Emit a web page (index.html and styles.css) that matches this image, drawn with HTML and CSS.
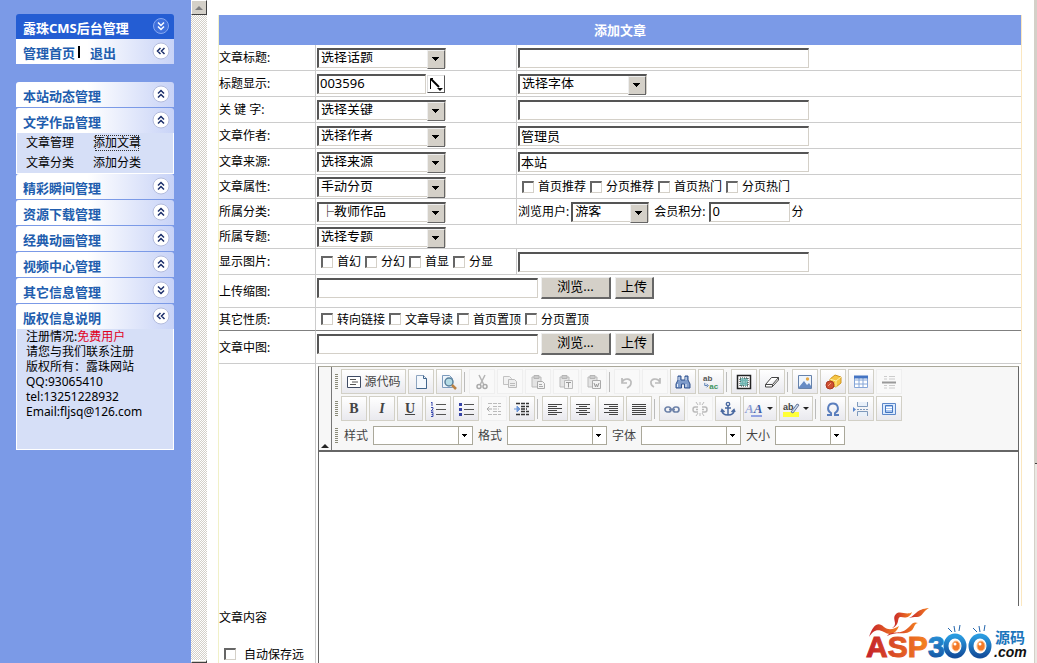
FILE: index.html
```html
<!DOCTYPE html>
<html lang="zh-CN">
<head>
    <meta charset="UTF-8">
    <meta name="viewport" content="width=device-width, initial-scale=1.0">
    <title>露珠CMS后台管理</title>
    <link rel="stylesheet" href="styles.css">
</head>
<body>
    <svg class="sprite" aria-hidden="true">
        <symbol id="up" viewBox="0 0 18 18"><circle cx="9" cy="9" r="8" fill="#fff" stroke="#b4bcdc"/><path d="M6 8.5l3-3 3 3M6 12.5l3-3 3 3" fill="none" stroke="#1c2f6b" stroke-width="1.5"/></symbol>
        <symbol id="down" viewBox="0 0 18 18"><circle cx="9" cy="9" r="8" fill="#fff" stroke="#b4bcdc"/><path d="M6 5.5l3 3 3-3M6 9.5l3 3 3-3" fill="none" stroke="#1c2f6b" stroke-width="1.5"/></symbol>
        <symbol id="left" viewBox="0 0 18 18"><circle cx="9" cy="9" r="8" fill="#fff" stroke="#b4bcdc"/><path d="M8.5 6l-3 3 3 3M12.5 6l-3 3 3 3" fill="none" stroke="#1c2f6b" stroke-width="1.5"/></symbol>
        <symbol id="clip" viewBox="0 0 16 16"><path d="M2 3h9v10H2z" fill="#e4e4e4" stroke="#bbb"/><path d="M4 1.5h5v3H4z" fill="#ccc" stroke="#b5b5b5"/></symbol>
    </svg>

    <aside class="sidebar">
        <div class="panel">
            <h1 class="head head-main">露珠CMS后台管理
                <svg class="toggle" viewBox="0 0 18 18"><circle cx="9" cy="9" r="7.5" fill="#3f70dc" stroke="#86a8f2"/><path d="M6 5.5l3 3 3-3M6 9.5l3 3 3-3" fill="none" stroke="#fff" stroke-width="1.5"/></svg>
            </h1>
            <div class="head head-flat"><a href="#">管理首页</a><i class="bar"></i><a href="#">退出</a><svg class="toggle"><use href="#left"/></svg></div>
        </div>

        <nav class="menu">
            <button class="head">本站动态管理<svg class="toggle"><use href="#up"/></svg></button>
            <button class="head">文学作品管理<svg class="toggle"><use href="#up"/></svg></button>
            <div class="submenu">
                <a href="#">文章管理</a><a href="#" class="focused">添加文章</a>
                <a href="#">文章分类</a><a href="#">添加分类</a>
            </div>
            <button class="head">精彩瞬间管理<svg class="toggle"><use href="#up"/></svg></button>
            <button class="head">资源下载管理<svg class="toggle"><use href="#up"/></svg></button>
            <button class="head">经典动画管理<svg class="toggle"><use href="#up"/></svg></button>
            <button class="head">视频中心管理<svg class="toggle"><use href="#up"/></svg></button>
            <button class="head">其它信息管理<svg class="toggle"><use href="#down"/></svg></button>
            <button class="head">版权信息说明<svg class="toggle"><use href="#left"/></svg></button>
            <div class="info">
                注册情况:<span class="red">免费用户</span><br>
                请您与我们联系注册<br>
                版权所有：露珠网站<br>
                QQ:93065410<br>
                tel:13251228932<br>
                Email:fljsq@126.com
            </div>
        </nav>
    </aside>

    <div class="scrollbar">
        <div class="scroll-button scroll-up"></div>
        <div class="scroll-button"></div>
    </div>

    <main class="main">
        <form>
        <table class="form-table">
            <colgroup><col class="col-label"><col class="col-field"><col></colgroup>
            <tr><th colspan="3" class="title">添加文章</th></tr>
            <tr>
                <td><label for="title">文章标题:</label></td>
                <td><span class="select"><select aria-label="话题"><option>选择话题</option></select></span></td>
                <td><input type="text" class="text wide" id="title"></td>
            </tr>
            <tr>
                <td><label for="color">标题显示:</label></td>
                <td>
                    <div class="line">
                        <input type="text" class="text color" id="color" value="003596">
                        <button type="button" class="picker" aria-label="颜色"><svg viewBox="0 0 16 16"><path d="M3 3l8 8" stroke="#000" stroke-width="2"/><path d="M2.5 13V2.5H5" fill="none" stroke="#000"/><path d="M9 12h6l-3 3z"/></svg></button>
                    </div>
                </td>
                <td><span class="select"><select aria-label="字体"><option>选择字体</option></select></span></td>
            </tr>
            <tr>
                <td><label for="keyword">关 键 字:</label></td>
                <td><span class="select"><select aria-label="关键"><option>选择关键</option></select></span></td>
                <td><input type="text" class="text wide" id="keyword"></td>
            </tr>
            <tr>
                <td><label for="author">文章作者:</label></td>
                <td><span class="select"><select aria-label="作者"><option>选择作者</option></select></span></td>
                <td><input type="text" class="text wide" id="author" value="管理员"></td>
            </tr>
            <tr>
                <td><label for="source">文章来源:</label></td>
                <td><span class="select"><select aria-label="来源"><option>选择来源</option></select></span></td>
                <td><input type="text" class="text wide" id="source" value="本站"></td>
            </tr>
            <tr class="short">
                <td><label for="paging">文章属性:</label></td>
                <td><span class="select"><select id="paging"><option>手动分页</option></select></span></td>
                <td>
                    <div class="line checks">
                        <label><input type="checkbox">首页推荐</label>
                        <label><input type="checkbox">分页推荐</label>
                        <label><input type="checkbox">首页热门</label>
                        <label><input type="checkbox">分页热门</label>
                    </div>
                </td>
            </tr>
            <tr>
                <td><label for="category">所属分类:</label></td>
                <td><span class="select"><select id="category"><option>├教师作品</option></select></span></td>
                <td>
                    <div class="line">
                        <label for="viewer">浏览用户:</label>
                        <span class="select select-small"><select id="viewer"><option>游客</option></select></span>
                        <label for="points" class="points">会员积分:</label>
                        <input type="text" class="text number" id="points" value="0">分
                    </div>
                </td>
            </tr>
            <tr class="short">
                <td><label for="topic">所属专题:</label></td>
                <td colspan="2"><span class="select"><select id="topic"><option>选择专题</option></select></span></td>
            </tr>
            <tr>
                <td><label for="picture">显示图片:</label></td>
                <td>
                    <div class="line checks">
                        <label><input type="checkbox">首幻</label>
                        <label><input type="checkbox">分幻</label>
                        <label><input type="checkbox">首显</label>
                        <label><input type="checkbox">分显</label>
                    </div>
                </td>
                <td><input type="text" class="text wide" id="picture"></td>
            </tr>
            <tr class="tall">
                <td><label for="thumb">上传缩图:</label></td>
                <td colspan="2">
                    <div class="line upload">
                        <input type="text" class="text file" id="thumb">
                        <button type="button" class="button browse">浏览...</button>
                        <button type="button" class="button">上传</button>
                    </div>
                </td>
            </tr>
            <tr class="dark">
                <td>其它性质:</td>
                <td colspan="2">
                    <div class="line checks">
                        <label><input type="checkbox">转向链接</label>
                        <label><input type="checkbox">文章导读</label>
                        <label><input type="checkbox">首页置顶</label>
                        <label><input type="checkbox">分页置顶</label>
                    </div>
                </td>
            </tr>
            <tr class="tall">
                <td><label for="middle">文章中图:</label></td>
                <td colspan="2">
                    <div class="line upload">
                        <input type="text" class="text file" id="middle">
                        <button type="button" class="button browse">浏览...</button>
                        <button type="button" class="button">上传</button>
                    </div>
                </td>
            </tr>
            <tr>
                <td>
                    <label for="content">文章内容</label>
                    <label class="autosave"><input type="checkbox">自动保存远</label>
                </td>
                <td colspan="2" class="editor-cell">
                    <div class="editor">
                        <div class="editor-top">
                            <button type="button" class="collapse" aria-label="收起"></button>
                            <div class="toolbars">
                                <div class="toolbar">
                                    <i class="handle"></i>
                                    <button type="button" class="tool source"><svg viewBox="0 0 16 16"><path d="M1.5 2.5h13v11h-13z" fill="#fff" stroke="#3f4b63"/><path d="M4 5.5h6M6 8h6M4 10.5h6" stroke="#555"/></svg>源代码</button>
                                    <button type="button" class="tool"><svg viewBox="0 0 16 16"><path d="M3.5 1.5h7l3 3v10h-10z" fill="#f4f8fd" stroke="#8ea5c0"/><path d="M10.5 1.5v3h3v10h-10" fill="none" stroke="#41658c"/></svg></button>
                                    <button type="button" class="tool"><svg viewBox="0 0 16 16"><path d="M1.5 1.5h7l3 3v9h-10z" fill="#edf4fb" stroke="#7d9bbd"/><circle cx="8" cy="8" r="4" fill="#b5dbe5" stroke="#587f9c" stroke-width="1.5"/><path d="M11 11l4 4" stroke="#bb8244" stroke-width="2.5"/></svg></button>
                                    <i class="sep"></i>
                                    <button type="button" class="tool off"><svg viewBox="0 0 16 16"><path d="M5 1l5 10M11 1L6 11" stroke="#b5b5b5" stroke-width="1.5"/><g fill="none" stroke="#aaa" stroke-width="1.5"><circle cx="5" cy="12.5" r="2"/><circle cx="11" cy="12.5" r="2"/></g></svg></button>
                                    <button type="button" class="tool off"><svg viewBox="0 0 16 16"><path d="M1.5 2.5h6l2 2v6h-8z" fill="#f2f2f2" stroke="#c2c2c2"/><path d="M6.5 5.5h6l2 2v6h-8z" fill="#eee" stroke="#bbb"/><path d="M8 9.5h5M8 11.5h5" stroke="#bbb"/></svg></button>
                                    <button type="button" class="tool off"><svg viewBox="0 0 16 16"><use href="#clip"/><path d="M7.5 7.5h5l2 2v5h-7z" fill="#f3f3f3" stroke="#aaa"/><path d="M9 10.5h3M9 12.5h4" stroke="#aaa"/></svg></button>
                                    <button type="button" class="tool off"><svg viewBox="0 0 16 16"><use href="#clip"/><path d="M6.5 6.5h8v8h-8z" fill="#f3f3f3" stroke="#bbb"/><path d="M8 8.5h5M10.5 8.5v5" stroke="#999"/></svg></button>
                                    <button type="button" class="tool off"><svg viewBox="0 0 16 16"><use href="#clip"/><path d="M6.5 6.5h8v8h-8z" fill="#f3f3f3" stroke="#aaa"/><path d="M8 9l1.5 4 1-3 1 3L13 9" fill="none" stroke="#999"/></svg></button>
                                    <i class="sep"></i>
                                    <button type="button" class="tool off"><svg viewBox="0 0 16 16"><path d="M3 4v5h5M3 8c3-5 10-3 9 1 0 2-2 4-4 5" fill="none" stroke="#bbb" stroke-width="1.7"/></svg></button>
                                    <button type="button" class="tool off"><svg viewBox="0 0 16 16"><path d="M13 4v5H8M13 8C10 3 3 5 4 9c0 2 1 3 3 4" fill="none" stroke="#bbb" stroke-width="1.7"/></svg></button>
                                    <button type="button" class="tool"><svg viewBox="0 0 16 16"><path d="M3 2h3v4h4V2h3v4l2 4v4H9.5v-4h-3v4H1v-4l2-4z" fill="#7f9ccb" stroke="#31538e"/><path d="M2.5 10v3M11 10v3M4 3v3M11 3v3" stroke="#e6eefb"/></svg></button>
                                    <button type="button" class="tool"><svg viewBox="0 0 18 18"><text x="0" y="8" class="icon-text" fill="#555">ab</text><text x="7" y="17" class="icon-text" fill="#3f9460">ac</text><path d="M2 10v3h3M4 11l2 2-2 2" fill="none" stroke="#4670ac"/></svg></button>
                                    <i class="sep"></i>
                                    <button type="button" class="tool"><svg viewBox="0 0 16 16"><path d="M1.5 1.5h13v13h-13z" fill="#fff" stroke="#222" stroke-width="1.5"/><path d="M4 4h8v8H4z" fill="#8fc5c2" stroke="#222" stroke-dasharray="1 1"/><path d="M4 6.5h8M4 9.5h8M6.5 4v8M9.5 4v8" stroke="#6fb5b1"/></svg></button>
                                    <button type="button" class="tool"><svg viewBox="0 0 16 16"><path d="M1.5 10.5l6-7h7l-6 7zM1.5 10.5V13H8l6.5-7V3.5M8.5 10.5V13" fill="#fff" stroke="#444"/></svg></button>
                                    <i class="sep"></i>
                                    <button type="button" class="tool"><svg viewBox="0 0 16 16"><path d="M1.5 1.5h13v13h-13z" fill="#eef5fd" stroke="#6682aa"/><path d="M2 13l5-6 3 4 2-2 2 3v2H2z" fill="#668bc4"/><circle cx="10.5" cy="5" r="1.7" fill="#e6a744"/></svg></button>
                                    <button type="button" class="tool"><svg viewBox="0 0 16 16"><path d="M5 5l5-4 6 2v6l-5 4-6-2z" fill="#f5c544" stroke="#cf9520"/><path d="M5 5l6 2 5-4M11 7v6" fill="none" stroke="#fff0a2"/><circle cx="5" cy="11" r="4" fill="#cf5033" stroke="#a93722"/><path d="M3 12l3-3" stroke="#f3a080"/></svg></button>
                                    <button type="button" class="tool"><svg viewBox="0 0 16 16"><path d="M1.5 2.5h13v11h-13zM1.5 6h13M1.5 10h13M6 3v11M10 3v11" fill="#fff" stroke="#86a6d8"/><path d="M1 1.5h14v3H1z" fill="#4474c3"/></svg></button>
                                    <button type="button" class="tool off"><svg viewBox="0 0 16 16"><path d="M3 2.5h3M8 2.5h6M3 5h3M8 5h6M3 11.5h3M8 11.5h6M3 14h3M8 14h6" stroke="#ccc"/><path d="M1 8.5h14" stroke="#999" stroke-width="2"/></svg></button>
                                </div>
                                <div class="toolbar">
                                    <i class="handle"></i>
                                    <button type="button" class="tool letter"><b>B</b></button>
                                    <button type="button" class="tool letter"><em>I</em></button>
                                    <button type="button" class="tool letter"><u>U</u></button>
                                    <button type="button" class="tool"><svg viewBox="0 0 16 16"><path d="M6 3.5h10M6 8.5h10M6 13.5h10" stroke="#555"/><path d="M1 2l1-1v4M1 6.5h2V8l-2 2h2.5M1 11.5h2v2H1.5M3 13.5v2H1" fill="none" stroke="#3848ae"/></svg></button>
                                    <button type="button" class="tool"><svg viewBox="0 0 16 16"><path d="M6 3.5h10M6 8.5h10M6 13.5h10" stroke="#555"/><path d="M1 2h3v3H1zM1 7h3v3H1zM1 12h3v3H1z" fill="#3643a6"/></svg></button>
                                    <button type="button" class="tool off"><svg viewBox="0 0 16 16"><path d="M2 2.5h13M7 5.5h8M7 8h6M7 10.5h8M2 13.5h13" stroke="#bbb" stroke-dasharray="4 1"/><path d="M6 8H1M3.500 5.500L1 8l2.500 2.500" fill="none" stroke="#aaa"/></svg></button>
                                    <button type="button" class="tool"><svg viewBox="0 0 16 16"><path d="M2 2.5h13M7 5.5h8M7 8h6M7 10.5h8M2 13.5h13" stroke="#333" stroke-width="1.5" stroke-dasharray="4 1"/><path d="M0 8h5M3 5l3 3-3 3z" fill="#6e97d8" stroke="#6e97d8"/></svg></button>
                                    <i class="sep"></i>
                                    <button type="button" class="tool"><svg viewBox="0 0 16 16"><path d="M1 3.5h14M1 5.5h9M1 7.5h14M1 9.5h9M1 11.5h14M1 13.5h9" stroke="#444"/></svg></button>
                                    <button type="button" class="tool"><svg viewBox="0 0 16 16"><path d="M1 3.5h14M4 5.5h8M1 7.5h14M4 9.5h8M1 11.5h14M4 13.5h8" stroke="#444"/></svg></button>
                                    <button type="button" class="tool"><svg viewBox="0 0 16 16"><path d="M1 3.5h14M6 5.5h9M1 7.5h14M6 9.5h9M1 11.5h14M6 13.5h9" stroke="#444"/></svg></button>
                                    <button type="button" class="tool"><svg viewBox="0 0 16 16"><path d="M1 3.5h14M1 5.5h14M1 7.5h14M1 9.5h14M1 11.5h14M1 13.5h14" stroke="#444"/></svg></button>
                                    <i class="sep"></i>
                                    <button type="button" class="tool"><svg viewBox="0 0 16 16"><g fill="none" stroke="#6d82a9" stroke-width="1.7"><rect x="1" y="6" width="6" height="5" rx="2.5"/><rect x="9" y="6" width="6" height="5" rx="2.5"/><path d="M5 8.5h6"/></g></svg></button>
                                    <button type="button" class="tool off"><svg viewBox="0 0 16 16"><g fill="none" stroke="#bbb" stroke-width="1.5"><path d="M6 6H3q-2 0-2 2.5T3 11h3M10 6h3q2 0 2 2.5T13 11h-3M4 8.5h2M10 8.5h2"/><path d="M4 1l2 3M8 1v3M12 1l-2 3M4 15l2-3M8 15v-3M12 15l-2-3" stroke-width="1"/></g></svg></button>
                                    <button type="button" class="tool"><svg viewBox="0 0 16 16"><circle cx="8" cy="3" r="1.7" fill="none" stroke="#4868a0" stroke-width="1.3"/><path d="M8 5v9M5 7h6M2 9c0 4 3 5 6 5s6-1 6-5M1 11l1-2.5L4.5 11M11.5 11L14 8.5l1 2.5" fill="none" stroke="#4868a0" stroke-width="1.5"/></svg></button>
                                    <button type="button" class="tool menu-tool"><svg viewBox="0 0 16 16"><text x="-2" y="12" class="icon-a"><tspan fill="#8fa0d4">A</tspan><tspan fill="#3f5faa">A</tspan></text><path d="M4 15h11" stroke="#7388dd" stroke-width="1.5"/></svg><i class="arrow"></i></button>
                                    <button type="button" class="tool menu-tool"><svg viewBox="0 0 16 16"><path d="M0 11h16v5H0z" fill="#ffff38"/><text x="0" y="9" class="icon-text" fill="#444">ab</text><path d="M8 11l6-8 2 1-6 8z" fill="#c9daef" stroke="#68789a"/></svg><i class="arrow"></i></button>
                                    <i class="sep"></i>
                                    <button type="button" class="tool"><svg viewBox="0 0 16 16"><path d="M2 14h4v-2C1 9 3 2.5 8 2.5s7 6.5 2 9.5v2h4" fill="none" stroke="#5a7ebd" stroke-width="2"/></svg></button>
                                    <button type="button" class="tool"><svg viewBox="0 0 16 16"><path d="M4.5 1v4.5h10V1M4.5 15v-4.5h10V15" fill="#e9f0f9" stroke="#7f99bb"/><path d="M4 8.5h12" stroke="#7f99bb" stroke-dasharray="2 1"/><path d="M0 6l3 2.500L0 11z" fill="#5a86cc"/></svg></button>
                                    <button type="button" class="tool"><svg viewBox="0 0 16 16"><path d="M1.5 2.5h13v11h-13z" fill="#dceafd" stroke="#5c87c9"/><path d="M4.5 4.5h7v7h-7z" fill="#a8c4ef" stroke="#4476bf"/><path d="M5 6.5h6M5 8.5h6" stroke="#fff"/></svg></button>
                                </div>
                                <div class="toolbar">
                                    <i class="handle"></i>
                                    <label class="combo">样式<span><select></select></span></label>
                                    <label class="combo">格式<span><select></select></span></label>
                                    <label class="combo">字体<span><select></select></span></label>
                                    <label class="combo combo-size">大小<span><select></select></span></label>
                                </div>
                            </div>
                        </div>
                        <textarea id="content"></textarea>
                    </div>
                </td>
            </tr>
        </table>
        </form>
    </main>

    <div class="edge"></div>

    <svg class="logo" viewBox="0 0 166 57" role="img">
        <defs>
            <linearGradient id="fire"><stop offset="0" stop-color="#c4212b"/><stop offset="1" stop-color="#f58220"/></linearGradient>
            <linearGradient id="sea" x1="0" y1="0" x2="0" y2="1"><stop offset="0" stop-color="#2a9be0"/><stop offset="1" stop-color="#134f9c"/></linearGradient>
        </defs>
        <g fill="url(#fire)">
            <path d="M4 31C8 19 13 15 19 21c5 4 10 2 15-1-3 8-9 10-15 6C12 22 8 25 4 31z"/>
            <path d="M27 22c7-4-1-9 4-14 4-4 11 2 16-2-2 6-7 6-11 5-5 0 0 8-9 11z"/>
            <path d="M44 12c6-2 7-9 20-10-6 3-7 10-13 9-2 0-4 0-7 1z"/>
            <path d="M22 30c6-7 13 1 23-10 3-4 5-4 8-3-5 1-3 7-9 9-6 3-12-1-22 4z"/>
        </g>
        <text x="1" y="51" class="logo-main" fill="url(#fire)" stroke="url(#fire)">ASP</text>
        <text x="63" y="51" class="logo-main" fill="url(#sea)" stroke="url(#sea)">3</text>
        <g stroke="#2265ac" fill="none"><path d="M83 22l4 4M89 20l1 6M95 19l-1 6M108 22l4 4M114 20l1 6M120 19l-1 6"/></g>
        <g fill="#fff" stroke="url(#sea)" stroke-width="5"><ellipse cx="90" cy="40" rx="9" ry="10"/><ellipse cx="115" cy="40" rx="9" ry="10"/></g>
        <g fill="#f47a28" stroke="#ffc18a"><ellipse cx="91" cy="40" rx="4" ry="5"/><ellipse cx="116" cy="40" rx="4" ry="5"/></g>
        <g fill="#fff"><circle cx="90" cy="38" r="1.5"/><circle cx="115" cy="38" r="1.5"/></g>
        <text x="130" y="37" class="logo-cn">源码</text>
        <text x="129" y="51" class="logo-com">.com</text>
    </svg>
</body>
</html>
```
FILE: styles.css
```css
* {
    box-sizing: border-box;
}

body {
    margin: 0;
    height: 100vh;
    display: flex;
    overflow: hidden;
    position: relative;
    background-color: #fff;
    color: #000;
    font-family: "Noto Sans", "Noto Sans CJK SC", sans-serif;
    font-size: 12px;
    line-height: 15px;
}

button, input, select, textarea {
    font: inherit;
    color: inherit;
    margin: 0;
    border-radius: 0;
}

a {
    color: inherit;
    text-decoration: none;
}

.sprite {
    display: none;
}

/* sidebar */
.sidebar {
    flex: 0 0 191px;
    padding: 14px 17px 0 16px;
    background-color: #7b9ae7;
}

.panel {
    margin-bottom: 18px;
}

.menu {
    display: flex;
    flex-direction: column;
    gap: 1px;
}

.head {
    display: flex;
    align-items: center;
    width: 100%;
    height: 25px;
    margin: 0;
    padding: 3px 4px 0 7px;
    border: none;
    border-radius: 3px 3px 0 0;
    background: linear-gradient(to right, #fff 45%, #c8d3f7);
    color: #215dae;
    font-size: 13px;
    font-weight: bold;
    text-align: left;
    cursor: pointer;
}

.head-main {
    background: #245dd3;
    color: #fff;
}

.head-flat {
    border-radius: 0;
}

.toggle {
    width: 18px;
    height: 18px;
    margin-left: auto;
    margin-bottom: 4px;
}

.bar {
    width: 2px;
    height: 12px;
    margin: 0 10px 3px 3px;
    background-color: #000;
}

.submenu {
    display: grid;
    grid-template-columns: 67px 1fr;
    justify-items: start;
    height: 41px;
    margin: -1px 0;
    padding: 0 9px;
    line-height: 20px;
    border: 1px solid #fff;
    border-top: none;
    background-color: #d6dff7;
}

.focused {
    outline: 1px dotted #333;
    outline-offset: -3px;
}

.info {
    height: 121px;
    margin-top: -1px;
    padding: 0 9px;
    border: 1px solid #fff;
    border-top: none;
    background-color: #d6dff7;
}

.red {
    color: #e0001b;
}

/* frame scrollbar */
.scrollbar {
    flex: 0 0 16px;
    height: 100vh;
    display: flex;
    flex-direction: column;
    justify-content: space-between;
    background: repeating-conic-gradient(#fff 0 25%, #d4d0c8 0 50%) 0 0 / 2px 2px;
}

.scroll-button {
    height: 3px;
    background-color: #d4d0c8;
    border: 1px solid #404040;
    border-top-color: #fff;
    border-left-color: #fff;
}

.scroll-up {
    height: 15px;
    display: flex;
    align-items: center;
    justify-content: center;
}

    .scroll-up::after {
        content: "";
        border: 4px solid transparent;
        border-top: none;
        border-bottom-color: #808080;
    }

.edge {
    flex: 0 0 3px;
    border-left: 1px solid #d4d0c8;
    background: linear-gradient(#d4d0c8 463px, #404040 463px, #404040 464px, #eae8e3 464px);
}

/* form */
.main {
    flex: 1;
    min-width: 0;
    padding: 15px 12px 0 11px;
}

.form-table {
    width: 100%;
    table-layout: fixed;
    border-spacing: 0;
    border-left: 1px solid #f1f1c8;
    border-right: 1px solid #fbe7c0;
}

.col-label {
    width: 97px;
}

.col-field {
    width: 201px;
}

.title {
    height: 30px;
    padding: 0;
    background-color: #7b9ae7;
    color: #fff;
    font-size: 13px;
}

td {
    height: 26px;
    padding: 0 1px;
    border-bottom: 1px solid #ccc;
    border-right: 1px solid #ccc;
}

    td:first-child {
        padding: 0;
    }

    td:last-child {
        border-right: none;
    }

.short td {
    height: 24px;
}

.tall td {
    height: 33px;
}

.dark td {
    height: 23px;
    border-bottom-color: #808080;
}

.line {
    display: flex;
    align-items: center;
}

.text {
    display: block;
    height: 20px;
    padding: 0 1px 2px;
    border: 1px solid #d4d0c8;
    border-top: 2px solid #555;
    border-left: 2px solid #555;
    background-color: #fff;
    font-size: 13px;
}

.wide {
    width: 291px;
    max-width: 100%;
}

.color {
    width: 109px;
}

.number {
    width: 81px;
    margin: 0 1px 0 4px;
}

.file {
    width: 221px;
    margin-right: 3px;
}

.select {
    position: relative;
    display: block;
    width: 129px;
    height: 20px;
}

    .select select {
        display: block;
        appearance: none;
        width: 100%;
        height: 20px;
        padding: 0 18px 4px 2px;
        border: 1px solid #d4d0c8;
        border-top: 2px solid #555;
        border-left: 2px solid #555;
        background-color: #fff;
        font-size: 13px;
        line-height: 14px;
    }

    .select::after {
        content: "";
        position: absolute;
        top: 2px;
        right: 1px;
        width: 16px;
        height: 17px;
        border: 1px solid #666;
        border-top-color: #eee;
        border-left-color: #eee;
        background: linear-gradient(#000, #000) 4px 6px / 7px 1px no-repeat,
            linear-gradient(#000, #000) 5px 7px / 5px 1px no-repeat,
            linear-gradient(#000, #000) 6px 8px / 3px 1px no-repeat,
            linear-gradient(#000, #000) 7px 9px / 1px 1px no-repeat #d4d0c8;
        pointer-events: none;
    }

.select-small {
    width: 78px;
    margin-left: 2px;
}

.points {
    margin-left: 5px;
}

.picker {
    width: 18px;
    height: 18px;
    margin-left: 1px;
    padding: 0;
    border: 1px solid #555;
    border-top-color: #ddd;
    border-left-color: #ddd;
    background-color: #fff;
}

    .picker svg {
        display: block;
        width: 16px;
        height: 16px;
    }

.checks {
    padding-left: 4px;
    gap: 4px;
}

    .checks label {
        display: flex;
        align-items: center;
        gap: 4px;
    }

input[type="checkbox"] {
    appearance: none;
    width: 12px;
    height: 12px;
    border: 1px solid #d4d0c8;
    border-top: 2px solid #666;
    border-left: 2px solid #666;
    background-color: #fff;
}

.upload {
    padding-bottom: 6px;
}

.button {
    height: 22px;
    margin-right: 4px;
    padding: 0 5px 2px;
    border: 2px solid #666;
    border-top: 1px solid #eee;
    border-left: 1px solid #eee;
    background-color: #d4d0c8;
    font-size: 13px;
}

.browse {
    width: 70px;
}

.autosave {
    display: flex;
    align-items: center;
    gap: 8px;
    margin-top: 22px;
    padding-left: 5px;
    white-space: nowrap;
}

/* editor */
.editor-cell {
    padding: 2px 2px 0 2px;
}

.editor {
    border: 1px solid #666;
    border-top-color: #aaa89a;
}

.editor-top {
    display: flex;
    border-bottom: 2px solid #666;
    background-color: #f7f7f7;
    color: #444;
}

.collapse {
    display: flex;
    align-items: flex-end;
    justify-content: center;
    width: 13px;
    padding: 0 0 2px;
    border: none;
    border-right: 1px solid #777;
    background: none;
}

    .collapse::after {
        content: "";
        border: 4px solid transparent;
        border-top: none;
        border-bottom-color: #222;
    }

.toolbars {
    display: flex;
    flex-direction: column;
    gap: 2px;
    padding: 2px 4px 2px 3px;
}

.toolbar {
    display: flex;
    align-items: center;
    gap: 2px;
    height: 25px;
}

.handle {
    width: 3px;
    height: 16px;
    margin-right: 1px;
    background: repeating-linear-gradient(#8a8a78 0 1px, transparent 1px 2px);
}

.tool {
    display: flex;
    align-items: center;
    justify-content: center;
    width: 26px;
    height: 25px;
    padding: 0;
    border: 1px solid #d2d0c6;
    background: linear-gradient(#fff, #e9e9ee);
}

    .tool svg {
        width: 16px;
        height: 16px;
        overflow: visible;
    }

.off {
    border-color: #efefef;
    background: #f9f9f9;
}

.source {
    width: 65px;
    gap: 2px;
}

.menu-tool {
    width: 34px;
    gap: 4px;
}

.letter {
    font-family: "Liberation Serif", serif;
    font-size: 14px;
    font-weight: bold;
}

.arrow {
    border: 3px solid transparent;
    border-top-color: #222;
    border-bottom: none;
}

.sep {
    width: 3px;
    height: 20px;
    border-left: 1px solid #bbb;
}

.icon-text {
    font: bold 9px "Liberation Sans", sans-serif;
}

.icon-a {
    font: italic bold 13px "Liberation Serif", serif;
}

.combo {
    display: flex;
    align-items: center;
    gap: 5px;
    margin-left: 3px;
}

    .combo span {
        position: relative;
    }

    .combo select {
        display: block;
        appearance: none;
        width: 100px;
        height: 19px;
        border: 1px solid #aaa89a;
        background-color: #fff;
    }

    .combo span::after {
        content: "";
        position: absolute;
        top: 1px;
        right: 1px;
        width: 13px;
        height: 17px;
        border-left: 1px solid #aaa89a;
        background: linear-gradient(#000, #000) 3px 7px / 5px 1px no-repeat,
            linear-gradient(#000, #000) 4px 8px / 3px 1px no-repeat,
            linear-gradient(#000, #000) 5px 9px / 1px 1px no-repeat;
        pointer-events: none;
    }

.combo-size select {
    width: 70px;
}

.editor textarea {
    display: block;
    width: 100%;
    height: 454px;
    border: none;
    outline: none;
    resize: none;
}

/* watermark over the page corner */
.logo {
    position: absolute;
    right: 6px;
    bottom: 0;
    width: 166px;
    height: 57px;
    background-color: #fff;
}

.logo-main {
    font: bold 30px "Liberation Sans", sans-serif;
    stroke-width: 1px;
}

.logo-cn {
    font: bold 15px "Noto Sans CJK SC", sans-serif;
    fill: #1b75bc;
}

.logo-com {
    font: italic bold 14px "Liberation Sans", sans-serif;
    fill: #111;
}
```
